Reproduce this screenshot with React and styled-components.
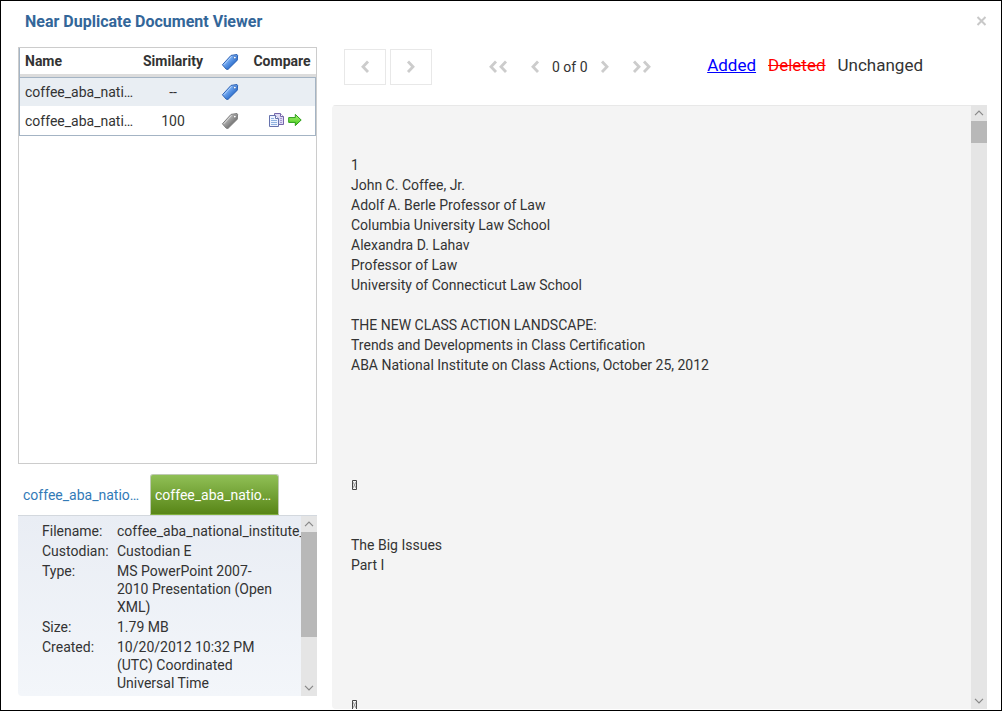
import React, { useState } from 'react'
import styled, { createGlobalStyle } from 'styled-components'

const GlobalStyle = createGlobalStyle`
  * { box-sizing: border-box; }
  body {
    margin: 0;
    background: #fff;
    color: #333;
    font-family: Roboto, "Liberation Sans", sans-serif;
    font-size: 14px;
    line-height: 20px;
  }
  button { font: inherit; color: inherit; cursor: pointer; }
`

const Dialog = styled.div`
  display: flex;
  flex-direction: column;
  height: 100vh;
  border: 1px solid #000;
  overflow: hidden;
`

const Header = styled.header`
  display: flex;
  justify-content: space-between;
  align-items: center;
  flex: none;
  height: 46px;
  padding: 0 14px 5px 24px;
`

const Title = styled.h1`
  margin: 0;
  font-size: 16px;
  font-weight: 700;
  color: #336699;
`

const CloseButton = styled.button`
  display: flex;
  padding: 0;
  border: 0;
  background: none;
`

const Body = styled.div`
  display: grid;
  grid-template-columns: 299px 1fr;
  gap: 15px;
  flex: 1;
  min-height: 0;
  padding: 0 14px 0 17px;
`

const Sidebar = styled.aside`
  display: flex;
  flex-direction: column;
  min-width: 0;
  min-height: 0;
  padding-bottom: 14px;
`

const ListBox = styled.div`
  flex: 1;
  min-height: 0;
  border: 1px solid #ccc;
`

const DocTable = styled.table`
  width: 100%;
  table-layout: fixed;
  border-collapse: separate;
  border-spacing: 0;
  border-left: 1px solid #a4b4c4;
`

const Th = styled.th`
  width: ${(p) => p.$width};
  height: 29px;
  padding: ${(p) => (p.$left ? '0 0 0 5px' : '0')};
  border-bottom: 3px solid #dcdcdc;
  font-weight: 700;
  text-align: ${(p) => (p.$left ? 'left' : 'center')};
  svg { display: block; margin: 2px auto 0; }
`

const Tr = styled.tr`
  background: ${(p) => (p.$selected ? '#e9eef3' : '#fff')};
  td:last-child { border-right: 1px solid #a4b4c4; }
  &:last-child td { height: 30px; border-bottom: 1px solid #a4b4c4; }
  &:first-child td { border-top: 1px solid #a4b4c4; }
`

const Td = styled.td`
  height: 29px;
  padding: ${(p) => (p.$left ? '0 0 0 5px' : '0')};
  text-align: ${(p) => (p.$left ? 'left' : 'center')};
  overflow: hidden;
  text-overflow: ellipsis;
  white-space: nowrap;
  svg { display: block; margin: 0 auto; }
`

const Actions = styled.div`
  display: flex;
  justify-content: center;
  align-items: center;
  gap: 4px;
  padding: 0 0 2px 8px;
`

const IconButton = styled.button`
  padding: 0;
  border: 0;
  background: none;
`

const Tabs = styled.div`
  display: flex;
  flex: none;
  gap: 3px;
  height: 41px;
  margin-top: 10px;
`

const Tab = styled.button`
  width: 129px;
  padding: 1px 4px 0;
  border: 1px solid ${(p) => (p.$active ? '#bfcab4' : 'transparent')};
  border-bottom-color: ${(p) => (p.$active ? '#7fae3c' : 'transparent')};
  border-radius: 3px 3px 0 0;
  background: ${(p) => (p.$active ? 'linear-gradient(#90c056, #588517)' : 'none')};
  color: ${(p) => (p.$active ? '#fff' : '#337ab7')};
  text-align: left;
  overflow: hidden;
  text-overflow: ellipsis;
  white-space: nowrap;
`

const InfoPanel = styled.div`
  display: flex;
  flex: none;
  height: 181px;
  border-top: 1px solid #d3d8de;
  border-radius: 0 0 0 4px;
  background: linear-gradient(#e9edf4, #f3f6fa);
  overflow: hidden;
`

const InfoList = styled.dl`
  display: grid;
  grid-template-columns: 75px 160px;
  align-content: start;
  row-gap: 2px;
  flex: 1;
  min-width: 0;
  margin: 0;
  padding: 6px 0 0 24px;
  line-height: 18px;
  overflow: hidden;
  dt, dd { margin: 0; }
`

const Filename = styled.dd`
  white-space: nowrap;
`

const Main = styled.main`
  display: flex;
  flex-direction: column;
  min-width: 0;
  min-height: 0;
`

const Toolbar = styled.div`
  display: flex;
  align-items: center;
  flex: none;
  height: 58px;
  padding: 0 64px 18px 12px;
`

const StepButtons = styled.div`
  display: flex;
  gap: 4px;
`

const StepButton = styled.button`
  display: flex;
  justify-content: center;
  align-items: center;
  width: 42px;
  height: 36px;
  padding: 0;
  border: 1px solid #e8e8e8;
  background: #fff;
`

const Pager = styled.div`
  display: flex;
  align-items: center;
  gap: 12px;
  margin-left: 56px;
`

const PagerButton = styled.button`
  display: flex;
  padding: 0;
  margin: ${(p) => (p.$first ? '0 10px 0 0' : p.$last ? '0 0 0 10px' : '0')};
  border: 0;
  background: none;
`

const Legend = styled.div`
  display: flex;
  gap: 12px;
  margin-left: auto;
  padding-bottom: 4px;
  font-size: 17px;
`

const Added = styled.ins`
  color: #0000ff;
`

const Deleted = styled.del`
  color: #ff0000;
`

const Viewer = styled.div`
  display: flex;
  flex: 1;
  min-height: 0;
  margin-bottom: 1px;
  border-radius: 4px 0 0 4px;
  background: #f4f4f4;
  overflow: hidden;
`

const DocText = styled.div`
  flex: 1;
  min-width: 0;
  padding: 49px 0 0 19px;
  border-top: 1px solid #e8e8e8;
  white-space: pre-wrap;
  overflow: hidden;
`

const Line = styled.div`
  height: 20px;
  svg { display: block; }
`

const ScrollTrack = styled.div`
  display: flex;
  flex-direction: column;
  flex: none;
  width: 16px;
  background: #e5e5e5;
`

const ScrollButton = styled.button`
  display: flex;
  justify-content: center;
  align-items: center;
  flex: none;
  width: 16px;
  height: 16px;
  margin-top: ${(p) => (p.$end ? 'auto' : '0')};
  padding: 0;
  border: 0;
  background: none;
`

const ScrollThumb = styled.div`
  flex: none;
  height: ${(p) => p.$size};
  background: #b8b8b8;
`

const Chevron = ({ right, double }) => (
  <svg width={double ? 20 : 10} height="14" viewBox={double ? '0 0 20 14' : '0 0 10 14'} fill="none" stroke="#ccc" strokeWidth="2.8">
    <g transform={right ? `translate(${double ? 20 : 10} 0) scale(-1 1)` : undefined}>
      <path d="M8 1.5 3 6.8l5 5.2" />
      {double && <path d="M18 1.5 13 6.8l5 5.2" />}
    </g>
  </svg>
)

const TagIcon = ({ gray }) => {
  const id = gray ? 'tag-gray' : 'tag-blue'
  return (
    <svg width="18" height="18" viewBox="0 0 18 18">
      <defs>
        <linearGradient id={id} x1="0" y1="0" x2="1" y2="1">
          <stop offset=".25" stopColor={gray ? '#c4c4c4' : '#8fc0ff'} />
          <stop offset=".75" stopColor={gray ? '#6b6b6b' : '#2468c8'} />
        </linearGradient>
      </defs>
      <path d="M1.4 11.8 10 2.4 16 1.5 16.6 2.2 16.3 7.2 7 16.4 5.2 16.2Z" fill={`url(#${id})`} stroke={gray ? '#808080' : '#2d62b5'} strokeLinejoin="round" />
      <path d="M2.8 11.8 10.6 3.4" stroke={gray ? '#ddd' : '#b4d6ff'} />
      <circle cx="13.8" cy="4.6" r="1.3" fill="#fff" stroke={gray ? '#777' : '#2d62b5'} strokeWidth=".7" />
    </svg>
  )
}

const CompareIcon = () => (
  <svg width="15" height="16" viewBox="0 0 15 16">
    <path d="M5.5 1.5h6l3 3v8h-9z" fill="#ddd9f3" stroke="#7566aa" />
    <path d="M11.5 1.5v3h3" fill="#fff" stroke="#7566aa" />
    <path d="M11 6.5h2M11 8.5h2M11 10.5h2" stroke="#a497cf" />
    <path d="M.5 3.5h6l3 3v8h-9z" fill="#eef4ff" stroke="#6672ad" />
    <path d="M6.5 3.5v3h3" fill="#fff" stroke="#6672ad" />
    <path d="M2 6.5h3M2 8.5h6M2 10.5h6M2 12.5h6" stroke="#8fb2df" />
  </svg>
)

const ArrowIcon = () => (
  <svg width="14" height="14" viewBox="0 0 14 14">
    <defs>
      <linearGradient id="go-arrow" x1="0" y1="0" x2="0" y2="1">
        <stop offset="0" stopColor="#b2f77a" />
        <stop offset="1" stopColor="#3cc612" />
      </linearGradient>
    </defs>
    <path d="M.7 4.6h6.6V1.4L13.2 7l-5.9 5.6V9.4H.7z" fill="url(#go-arrow)" stroke="#2b9c19" strokeLinejoin="round" />
  </svg>
)

const ScrollArrow = ({ down }) => (
  <svg width="10" height="6" viewBox="0 0 10 6" fill="none" stroke="#888" strokeWidth="1.2">
    <path d={down ? 'M1 .8 5 4.8l4-4' : 'M1 5.2l4-4 4 4'} />
  </svg>
)

// unprintable characters in the extracted text
const MissingGlyph = () => (
  <svg width="7" height="20" viewBox="0 0 7 20" fill="none" stroke="#444">
    <path d="M1.5 5.5h4v9h-4z" />
    <path d="M2 7 5 13M5 7 2 13" stroke="#888" strokeWidth=".8" />
  </svg>
)

const Scrollbar = ({ size }) => (
  <ScrollTrack>
    <ScrollButton aria-label="Scroll up"><ScrollArrow /></ScrollButton>
    <ScrollThumb $size={size} />
    <ScrollButton $end aria-label="Scroll down"><ScrollArrow down /></ScrollButton>
  </ScrollTrack>
)

const docs = [
  { name: 'coffee_aba_national_institute_1.pptx', similarity: '--' },
  { name: 'coffee_aba_national_institute_2.pptx', similarity: '100', compare: true },
]

const lines = [
  '1',
  'John C. Coffee, Jr.',
  'Adolf A. Berle Professor of Law',
  'Columbia University Law School',
  'Alexandra D. Lahav',
  'Professor of Law',
  'University of Connecticut Law School',
  '',
  'THE NEW CLASS ACTION LANDSCAPE:',
  'Trends and Developments in Class Certification',
  'ABA National Institute on Class Actions, October 25, 2012',
  '', '', '', '', '',
  null,
  '', '',
  'The Big Issues',
  'Part I',
  '', '', '', '', '', '',
  null,
]

const App = () => {
  const [tab, setTab] = useState(1)

  return (
    <Dialog>
      <GlobalStyle />
      <Header>
        <Title>Near Duplicate Document Viewer</Title>
        <CloseButton aria-label="Close">
          <svg width="11" height="11" viewBox="0 0 11 11" stroke="#c8c8c8" strokeWidth="2">
            <path d="M1.5 1l8 8M9.5 1l-8 8" />
          </svg>
        </CloseButton>
      </Header>
      <Body>
        <Sidebar>
          <ListBox>
            <DocTable>
              <thead>
                <tr>
                  <Th $left $width="115px">Name</Th>
                  <Th $width="76px">Similarity</Th>
                  <Th $width="37px"><TagIcon /></Th>
                  <Th>Compare</Th>
                </tr>
              </thead>
              <tbody>
                {docs.map((doc, i) => (
                  <Tr key={doc.name} $selected={i === 0}>
                    <Td $left>{doc.name}</Td>
                    <Td>{doc.similarity}</Td>
                    <Td><TagIcon gray={i > 0} /></Td>
                    <Td>
                      {doc.compare && (
                        <Actions>
                          <IconButton aria-label="Compare"><CompareIcon /></IconButton>
                          <IconButton aria-label="Open"><ArrowIcon /></IconButton>
                        </Actions>
                      )}
                    </Td>
                  </Tr>
                ))}
              </tbody>
            </DocTable>
          </ListBox>
          <Tabs role="tablist">
            {docs.map((doc, i) => (
              <Tab key={doc.name} role="tab" aria-selected={tab === i} $active={tab === i} onClick={() => setTab(i)}>
                {doc.name}
              </Tab>
            ))}
          </Tabs>
          <InfoPanel>
            <InfoList>
              <dt>Filename:</dt>
              <Filename>coffee_aba_national_institute_2.pptx</Filename>
              <dt>Custodian:</dt>
              <dd>Custodian E</dd>
              <dt>Type:</dt>
              <dd>MS PowerPoint 2007-2010 Presentation (Open XML)</dd>
              <dt>Size:</dt>
              <dd>1.79 MB</dd>
              <dt>Created:</dt>
              <dd>10/20/2012 10:32 PM (UTC) Coordinated Universal Time</dd>
            </InfoList>
            <Scrollbar size="105px" />
          </InfoPanel>
        </Sidebar>
        <Main>
          <Toolbar>
            <StepButtons>
              <StepButton aria-label="Previous difference"><Chevron /></StepButton>
              <StepButton aria-label="Next difference"><Chevron right /></StepButton>
            </StepButtons>
            <Pager>
              <PagerButton $first aria-label="First"><Chevron double /></PagerButton>
              <PagerButton aria-label="Previous"><Chevron /></PagerButton>
              <span>0 of 0</span>
              <PagerButton aria-label="Next"><Chevron right /></PagerButton>
              <PagerButton $last aria-label="Last"><Chevron right double /></PagerButton>
            </Pager>
            <Legend>
              <Added>Added</Added>
              <Deleted>Deleted</Deleted>
              <span>Unchanged</span>
            </Legend>
          </Toolbar>
          <Viewer>
            <DocText>
              {lines.map((line, i) => (
                <Line key={i}>{line === null ? <MissingGlyph /> : line}</Line>
              ))}
            </DocText>
            <Scrollbar size="22px" />
          </Viewer>
        </Main>
      </Body>
    </Dialog>
  )
}

export default App
